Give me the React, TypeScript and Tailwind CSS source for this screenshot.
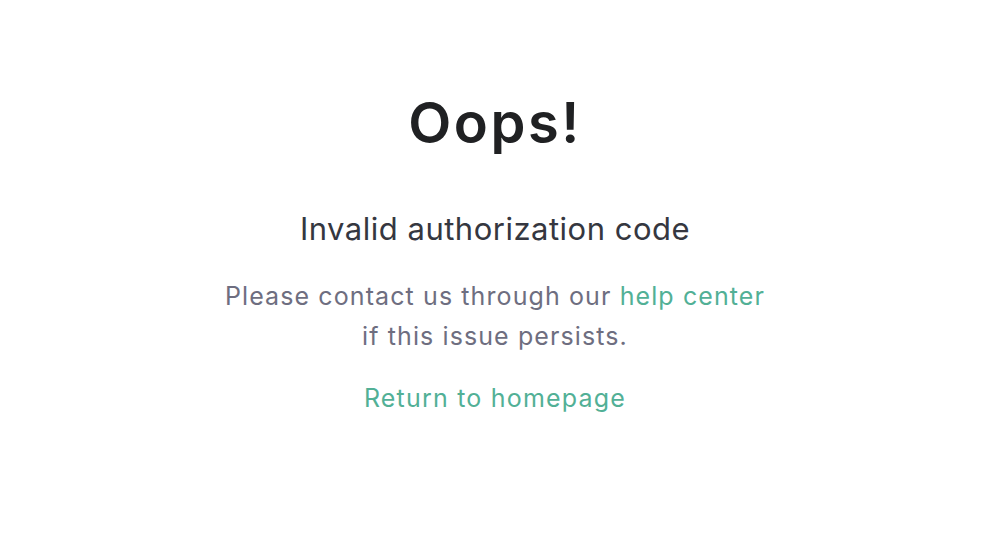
import React from "react";

export default function App() {
  return (
    <div
      className="flex h-[560px] w-full flex-col items-center bg-white pr-[12px] text-center"
      style={{ fontFamily: "Inter, 'Noto Sans', sans-serif" }}
    >
      <h1 className="mt-[89px] text-[56px] font-semibold leading-[68px] tracking-[2.5px] text-[#202123]">
        Oops!
      </h1>
      <p className="mt-[52px] text-[31px] leading-[40px] tracking-[0.5px] text-[#353740]">
        Invalid authorization code
      </p>
      <p className="mt-[27px] text-[25px] leading-[40px] tracking-[1.1px] text-[#6e6e80]">
        Please contact us through our{" "}
        <a href="#" className="text-[#52b096]">
          help center
        </a>
        <br />
        if this issue persists.
      </p>
      <a href="#" className="mt-[22px] text-[25px] leading-[40px] tracking-[1.2px] text-[#52b096]">
        Return to homepage
      </a>
    </div>
  );
}
